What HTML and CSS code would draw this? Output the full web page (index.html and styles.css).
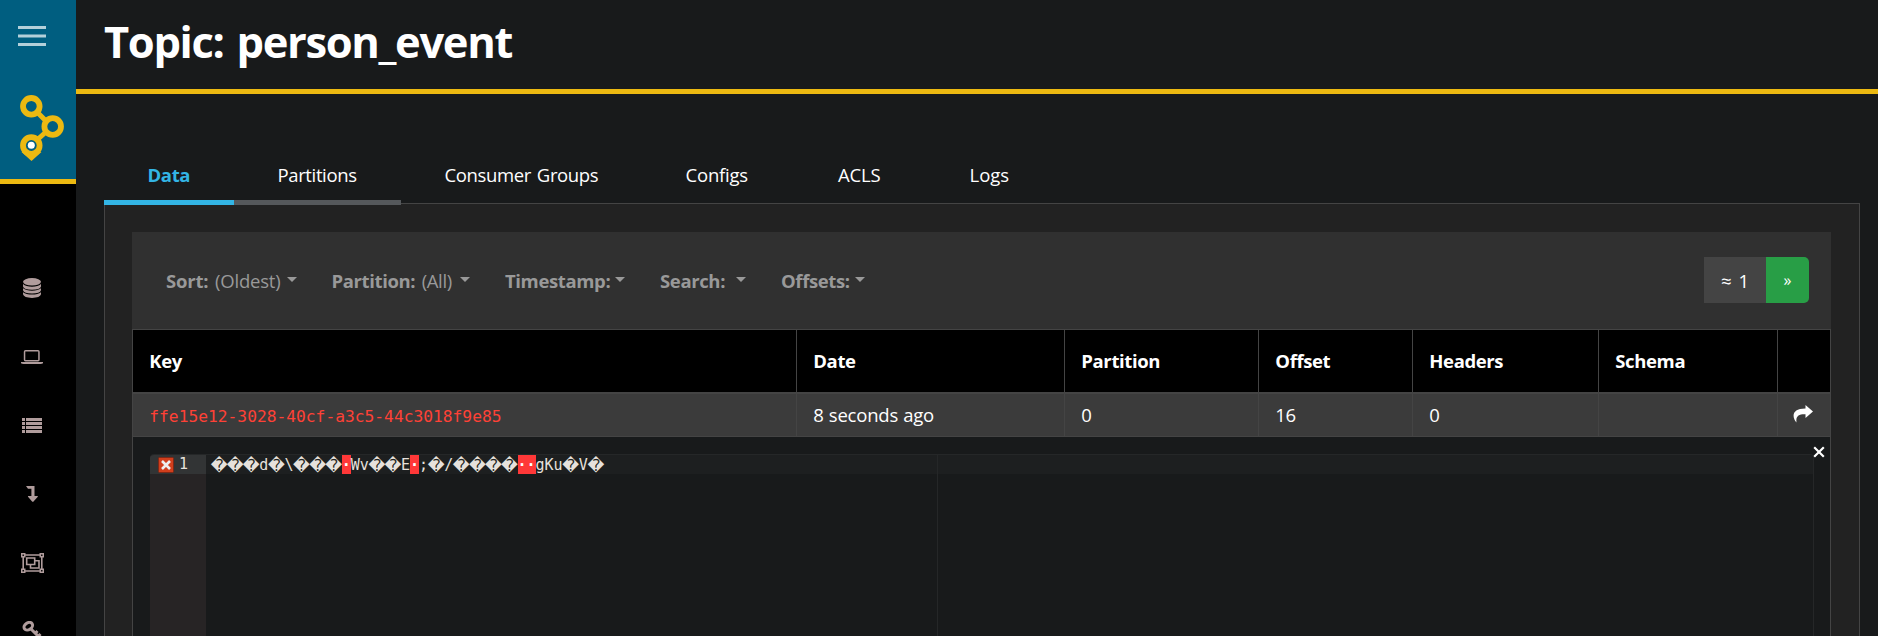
FILE: index.html
```html
<!DOCTYPE html>
<html lang="en">
<head>
<meta charset="utf-8">
<title>Topic: person_event</title>
<link rel="stylesheet" href="styles.css">
</head>
<body>
<div class="app">
  <nav class="sidebar">
    <div class="brand">
      <svg class="burger" width="28" height="20" viewBox="0 0 28 20"><path d="M0 1.5H28M0 10H28M0 18.5H28"/></svg>
      <svg class="logo" width="44" height="67" viewBox="0 0 44 67">
        <path class="link" d="M17 17L27 27M17 45L27 36"/>
        <path class="pin" d="M1.500 57L11.500 66L21.500 57Z"/>
        <circle class="ring" cx="11.300" cy="11.300" r="8.300"/>
        <circle class="ring" cx="32.700" cy="31.500" r="8.300"/>
        <circle class="ring" cx="11.300" cy="50.500" r="8.300"/>
        <circle class="dot" cx="11.300" cy="50.300" r="3.500"/>
      </svg>
    </div>
    <ul class="menu">
      <li><svg width="18" height="20" viewBox="0 0 18 20"><ellipse cx="9" cy="3.800" rx="9" ry="3.700"/><path d="M0 6Q3 8.700 9 8.700T18 6V8.400Q17 11.600 9 11.700Q1 11.600 0 8.400ZM0 10.300Q3 12.700 9 12.700T18 10.300V12.300Q17 15.500 9 15.600Q1 15.500 0 12.300ZM0 14.200Q3 16.600 9 16.600T18 14.200V16.300Q17 19.800 9 19.900Q1 19.800 0 16.300Z"/></svg></li>
      <li><svg width="22" height="14" viewBox="0 0 22 14"><path fill-rule="evenodd" d="M4.500 0H17A1.700 1.700 0 0 1 18.700 1.700V9.700A1.700 1.700 0 0 1 17 11.400H4.500A1.700 1.700 0 0 1 2.800 9.700V1.700A1.700 1.700 0 0 1 4.500 0ZM4.300 1.500V10H17.200V1.500ZM0 12H22V13.200Q21 14 19.500 14H2.500Q1 14 0 13.200Z"/></svg></li>
      <li><svg width="20" height="15" viewBox="0 0 20 15"><path d="M0 0H3V3H0ZM4 0H20V3H4ZM0 4H3V7H0ZM4 4H20V7H4ZM0 8H3V11H0ZM4 8H20V11H4ZM0 12H3V15H0ZM4 12H20V15H4Z"/></svg></li>
      <li><svg width="12" height="16" viewBox="0 0 12 16"><path d="M0 0H8.500V10H11.600Q12 10.300 11.800 10.800L7.300 15.700Q6.800 16 6.300 15.700L2 10.800Q1.800 10.300 2.200 10H5.400V2.800H2Z"/></svg></li>
      <li><svg width="23" height="20" viewBox="0 0 23 20"><g class="stroked"><path d="M3.500 2H19.500M3.500 18H19.500M2.200 4V16M20.800 4V16"/><path d="M.7.700H3.700V3.700H.7ZM19.300.7H22.300V3.700H19.300ZM.7 16.300H3.700V19.300H.7ZM19.300 16.300H22.300V19.300H19.300Z"/><path d="M5.700 5H13.700V11.500H5.700ZM14 7.700H18V15H9.500V12"/></g></svg></li>
      <li><svg width="20" height="20" viewBox="0 0 20 20"><g class="keyline"><ellipse cx="6.300" cy="5.200" rx="4.600" ry="3.400" transform="rotate(-35 6.300 5.200)"/><path d="M9 8L18 17M13 12.500L15.500 10M16 15.500L18.500 13"/></g></svg></li>
    </ul>
  </nav>
  <main class="main">
    <header class="header"><h1>Topic: person_event</h1></header>
    <div class="tabs">
      <a class="tab t-data active">Data</a><a class="tab t-part hovered">Partitions</a><a class="tab t-groups">Consumer Groups</a><a class="tab t-configs">Configs</a><a class="tab t-acls">ACLS</a><a class="tab t-logs">Logs</a>
    </div>
    <section class="panel">
      <div class="toolbar">
        <div class="filters">
          <div class="filter f-sort"><span><b>Sort:</b> (Oldest)</span><i class="caret"></i></div>
          <div class="filter f-partition"><span><b>Partition:</b> (All)</span><i class="caret"></i></div>
          <div class="filter f-time"><span><b>Timestamp:</b></span><i class="caret"></i></div>
          <div class="filter f-search"><span><b>Search:</b></span><i class="caret"></i></div>
          <div class="filter f-offsets"><span><b>Offsets:</b></span><i class="caret"></i></div>
        </div>
        <div class="pager"><span class="count">≈ 1</span><span class="next">»</span></div>
      </div>
      <div class="grid head">
        <div>Key</div><div>Date</div><div>Partition</div><div>Offset</div><div>Headers</div><div>Schema</div><div></div>
      </div>
      <div class="grid row">
        <div><code>ffe15e12-3028-40cf-a3c5-44c3018f9e85</code></div><div class="ago">8 seconds ago</div><div>0</div><div>16</div><div>0</div><div></div>
        <div><svg width="20" height="18" viewBox="0 0 20 18"><path d="M12.500 0L20 6.500L12.500 13V9.300C6.500 9 2.500 10.500 3.500 17.500C-1.500 11.500-1 3.500 12.500 3.500Z"/></svg></div>
      </div>
      <div class="detail">
        <div class="editor">
          <div class="gutter"><div class="gutter-line"><svg width="16" height="16" viewBox="0 0 16 16"><rect class="err" x=".5" y=".5" width="15" height="15" rx="1"/><path class="cross" d="M4 4L12 12M12 4L4 12"/></svg><span>1</span></div></div>
          <div class="code">
            <div class="line"><i>�</i><i>�</i><i>�</i>d<i>�</i>\<i>�</i><i>�</i><i>�</i><em>·</em>Wv<i>�</i><i>�</i>E<em>·</em>;<i>�</i>/<i>�</i><i>�</i><i>�</i><i>�</i><em>·</em><em>·</em>gKu<i>�</i>V<i>�</i></div>
            <div class="margin-rule"></div>
          </div>
        </div>
        <svg class="close" width="12" height="12" viewBox="0 0 12 12"><path d="M1.200 1.200L10.800 10.800M10.800 1.200L1.200 10.800"/></svg>
      </div>
    </section>
  </main>
</div>
</body>
</html>
```
FILE: styles.css
```css
* { box-sizing: border-box; }
body { margin: 0; background: #181a1b; color: #fff; font: 18.5px/28px "Open Sans", "Noto Sans", sans-serif; letter-spacing: -0.37px; }
.app { display: flex; height: 636px; overflow: hidden; }
.sidebar { width: 76px; flex: none; background: #000; overflow: hidden; }
.brand { height: 184px; background: #005e80; border-bottom: 5px solid #ecb911; padding: 26px 0 0 18px; }
.burger, .logo { display: block; }
.burger path { stroke: #b4d0da; stroke-width: 2.8; }
.logo { margin: 48.500px 0 0 2px; }
.link { stroke: #ecb911; stroke-width: 5; }
.pin { fill: #ecb911; }
.ring { fill: #005e80; stroke: #ecb911; stroke-width: 5.8; }
.dot { fill: #fff; }
.menu { list-style: none; margin: 0; padding: 69.500px 0 0; }
.menu li { height: 68.700px; display: flex; align-items: center; justify-content: center; padding-right: 12px; }
.menu svg { fill: #b09c9c; flex: none; }
.stroked { fill: none; stroke: #b09c9c; stroke-width: 1.6; }
.keyline { fill: none; stroke: #b09c9c; stroke-width: 3; }
.main { flex: 1; min-width: 0; display: flex; flex-direction: column; }
.header { height: 94px; flex: none; border-bottom: 5px solid #ecb911; padding: 14px 0 0 28px; }
h1 { margin: 0; font-size: 43.500px; line-height: 56px; letter-spacing: -1.35px; word-spacing: 3px; }
.tabs { height: 111px; flex: none; padding: 56px 0 0 28px; display: flex; position: relative; z-index: 1; }
.tab { height: 55px; padding: 11px 0 0 43.500px; border-bottom: 5px solid transparent; white-space: nowrap; }
.t-data { width: 130px; }
.t-part { width: 167px; }
.t-groups { width: 241px; word-spacing: 1.5px; }
.t-configs { width: 152.500px; letter-spacing: -0.2px; }
.t-acls { width: 131.500px; letter-spacing: -0.2px; }
.t-logs { width: 128px; letter-spacing: 0; }
.active { color: #33b5e5; font-weight: bold; border-color: #33b5e5; }
.hovered { border-color: #55585b; }
.panel { margin: -2px 18px 0 28px; flex: 1; min-height: 0; background: #222; border: 1px solid #444; border-bottom: 0; padding: 28px 28px 0 27px; display: flex; flex-direction: column; }
.toolbar { height: 97px; flex: none; background: #303030; display: flex; justify-content: space-between; align-items: center; padding: 0 22px 0 34px; }
.filters { display: flex; color: #999; white-space: nowrap; word-spacing: 2px; }
.filter { display: flex; align-items: center; justify-content: space-between; }
.f-sort { width: 131px; margin-right: 34.500px; letter-spacing: -0.2px; }
.f-partition { width: 138.500px; margin-right: 35px; }
.f-time { width: 120px; margin-right: 35px; }
.f-search { width: 86px; margin-right: 35px; }
.f-offsets { width: 84px; }
.caret { border: 5px solid transparent; border-top-color: #999; border-bottom: 0; margin-top: -2px; }
.pager { display: flex; height: 46px; margin-top: -1px; line-height: 47px; text-align: center; letter-spacing: 0; }
.count { width: 62px; background: #444; word-spacing: 2px; }
.next { width: 43px; background: #289e46; border-radius: 0 5px 5px 0; font-size: 16px; }
.grid { display: grid; grid-template-columns: 664px 268px 194px 154px 186px 179px 53px; border-left: 1px solid #444; flex: none; }
.grid > div { border-right: 1px solid #444; padding-left: 16.300px; display: flex; align-items: center; }
.head { background: #000; font-weight: bold; height: 65px; border-top: 1px solid #444; border-bottom: 2px solid #444; }
.row { background: #3b3b3b; height: 43px; border-bottom: 1px solid #444; }
.ago { letter-spacing: -0.2px; word-spacing: 0.5px; }
.row svg { fill: #fff; margin-left: -1px; margin-top: -2px; }
code { font: 16.25px "DejaVu Sans Mono", monospace; letter-spacing: 0; color: #ff4136; padding-top: 2px; }
.detail { flex: 1; min-height: 0; background: #181a1b; border: 1px solid #444; border-top: 0; border-bottom: 0; padding: 17px 16px 0 17px; position: relative; }
.editor { height: 100%; border: 1px solid #252728; border-bottom: 0; border-left: 0; border-radius: 4px 4px 0 0; display: flex; overflow: hidden; font: 15px/21px "DejaVu Sans Mono", monospace; letter-spacing: 0; color: #e6e1dc; }
.gutter { width: 56px; background: #272425; flex: none; }
.gutter-line { height: 19px; background: #323435; display: flex; align-items: center; padding-left: 8px; gap: 5px; }
.err { fill: #d13e1c; stroke: #7d2817; }
.cross { stroke: #eee; stroke-width: 2.6; }
.code { flex: 1; position: relative; }
.line { height: 19px; background: #1d1f20; padding-left: 5px; white-space: nowrap; display: flex; }
.line i { width: 16.1px; font: 16.4px/21px "DejaVu Sans", sans-serif; display: flex; justify-content: center; }
.line em { width: 9px; background: #ff3838; color: #fff; font-style: normal; font-weight: bold; height: 19px; }
.margin-rule { position: absolute; left: 731px; top: 0; bottom: 0; width: 1px; background: #252728; }
.close { position: absolute; right: 5px; top: 9px; stroke: #fff; stroke-width: 2.2; }
```
